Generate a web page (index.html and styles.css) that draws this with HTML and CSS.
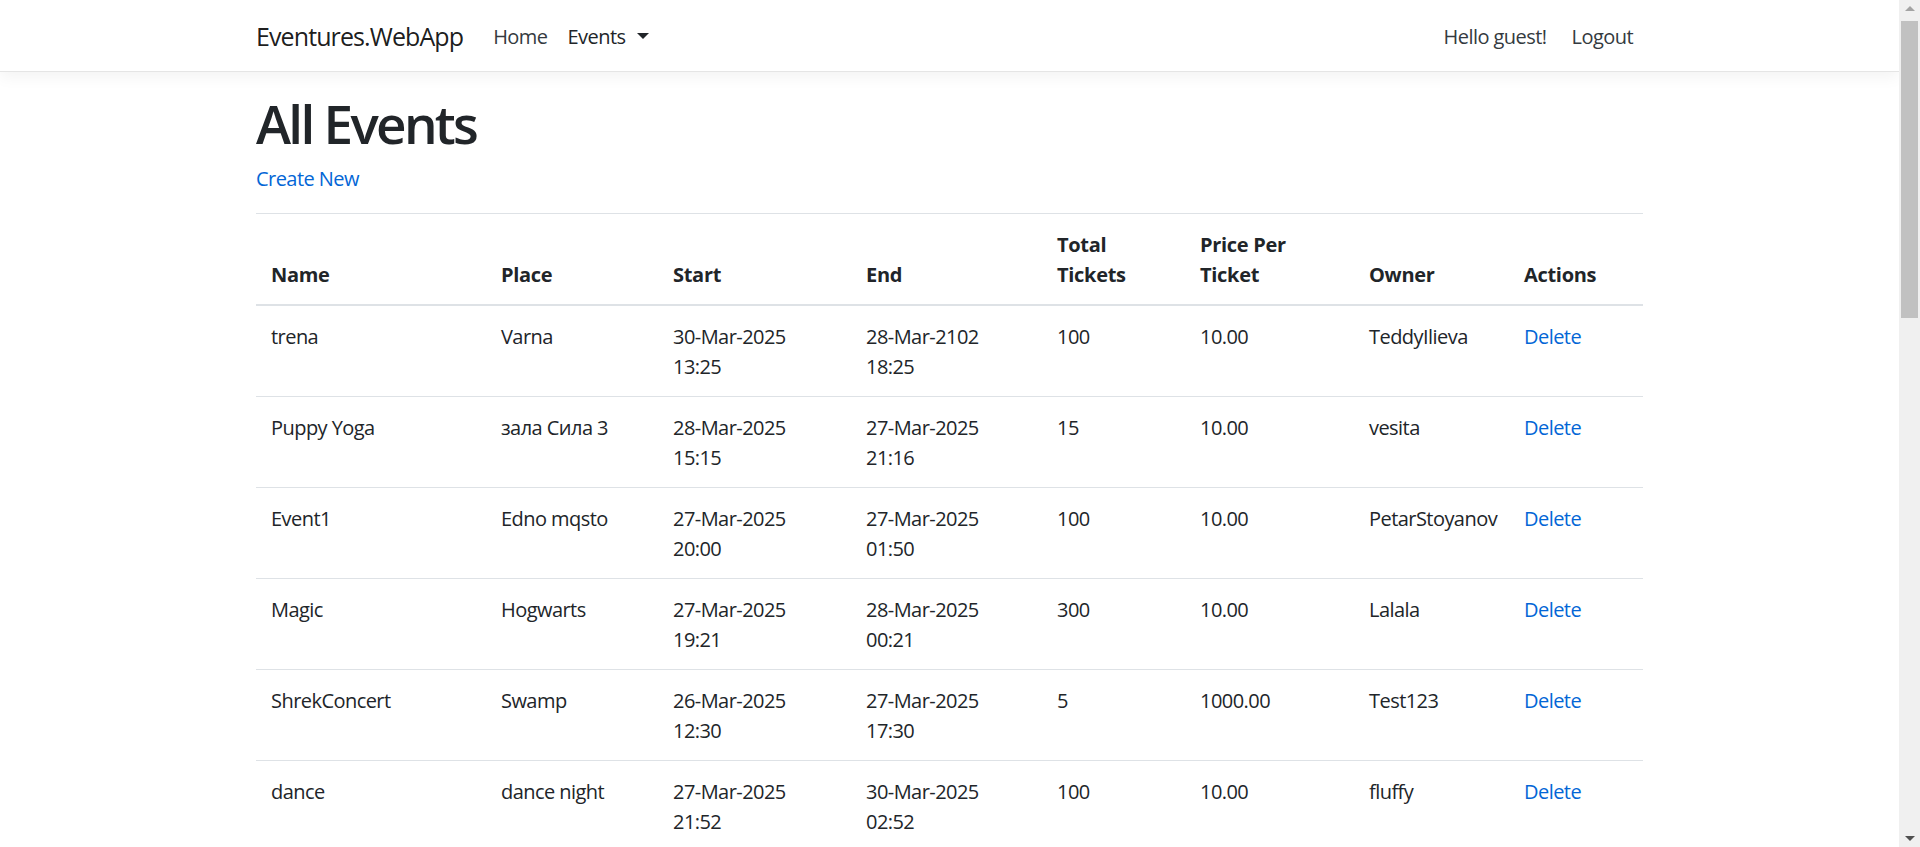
FILE: index.html
```html
<!DOCTYPE html>
<html lang="en">
<head>
<meta charset="utf-8">
<title>All Events - Eventures.WebApp</title>
<link rel="stylesheet" href="styles.css">
</head>
<body>
<div class="page">
  <header class="navbar">
    <div class="nav-inner">
      <a class="brand" href="#">Eventures.WebApp</a>
      <nav class="nav-left">
        <a class="nav-link" href="#">Home</a>
        <a class="nav-link nav-dropdown" href="#">Events<span class="caret"></span></a>
      </nav>
      <nav class="nav-right">
        <span class="nav-link nav-greet">Hello guest!</span>
        <a class="nav-link" href="#">Logout</a>
      </nav>
    </div>
  </header>
  <main class="container">
    <h1 class="title">All Events</h1>
    <p class="create"><a href="#">Create New</a></p>
    <table class="events">
      <colgroup>
        <col class="c-name"><col class="c-place"><col class="c-start"><col class="c-end"><col class="c-total"><col class="c-price"><col class="c-owner"><col class="c-actions">
      </colgroup>
      <thead>
        <tr><th>Name</th><th>Place</th><th>Start</th><th>End</th><th>Total Tickets</th><th>Price Per Ticket</th><th>Owner</th><th>Actions</th></tr>
      </thead>
      <tbody>
        <tr><td>trena</td><td>Varna</td><td>30-Mar-2025 13:25</td><td>28-Mar-2102 18:25</td><td>100</td><td>10.00</td><td>TeddyIlieva</td><td><a href="#">Delete</a></td></tr>
        <tr><td>Puppy Yoga</td><td>зала Сила 3</td><td>28-Mar-2025 15:15</td><td>27-Mar-2025 21:16</td><td>15</td><td>10.00</td><td>vesita</td><td><a href="#">Delete</a></td></tr>
        <tr><td>Event1</td><td>Edno mqsto</td><td>27-Mar-2025 20:00</td><td>27-Mar-2025 01:50</td><td>100</td><td>10.00</td><td>PetarStoyanov</td><td><a href="#">Delete</a></td></tr>
        <tr><td>Magic</td><td>Hogwarts</td><td>27-Mar-2025 19:21</td><td>28-Mar-2025 00:21</td><td>300</td><td>10.00</td><td>Lalala</td><td><a href="#">Delete</a></td></tr>
        <tr><td>ShrekConcert</td><td>Swamp</td><td>26-Mar-2025 12:30</td><td>27-Mar-2025 17:30</td><td>5</td><td>1000.00</td><td>Test123</td><td><a href="#">Delete</a></td></tr>
        <tr><td>dance</td><td>dance night</td><td>27-Mar-2025 21:52</td><td>30-Mar-2025 02:52</td><td>100</td><td>10.00</td><td>fluffy</td><td><a href="#">Delete</a></td></tr>
      </tbody>
    </table>
  </main>
</div>
<div class="scrollbar" aria-hidden="true">
  <div class="sb-arrow"><span class="sb-up"></span></div>
  <div class="sb-thumb"></div>
  <div class="sb-space"></div>
  <div class="sb-arrow"><span class="sb-down"></span></div>
</div>
</body>
</html>
```
FILE: styles.css
```css
html, body {
  margin: 0;
  height: 100%;
  overflow: hidden;
}
body {
  display: flex;
  font-family: "Segoe UI", "Open Sans", "Noto Sans", sans-serif;
  font-size: 20px;
  line-height: 30px;
  letter-spacing: -0.55px;
  color: #212529;
  background: #fff;
}
a {
  color: #0366d6;
  text-decoration: none;
}
.page {
  flex: 1;
  min-width: 0;
  height: 100%;
  overflow: hidden;
}

/* navbar */
.navbar {
  height: 71px;
  background: #fff;
  border-bottom: 1px solid #e5e5e5;
  box-shadow: 0 5px 15px rgba(0, 0, 0, 0.05);
}
.nav-inner {
  box-sizing: border-box;
  width: 1387px;
  height: 100%;
  margin: 0 auto;
  padding-top: 2px;
  display: flex;
  align-items: center;
}
.brand {
  font-size: 25px;
  line-height: 37px;
  letter-spacing: -0.9px;
  color: rgba(0, 0, 0, 0.9);
  margin-right: 20px;
}
.nav-left, .nav-right {
  display: flex;
  align-items: center;
}
.nav-right {
  margin-left: auto;
}
.nav-link {
  padding: 0 10px;
  color: #343a40;
}
.nav-greet {
  padding-right: 15px;
}
.nav-dropdown {
  color: #212529;
  display: flex;
  align-items: center;
}
.caret {
  width: 0;
  height: 0;
  margin-left: 12px;
  margin-top: -2px;
  border-top: 6px solid #212529;
  border-left: 6px solid transparent;
  border-right: 6px solid transparent;
}

/* content */
.container {
  width: 1387px;
  margin: 20px auto 0;
}
.title {
  font-size: 53px;
  line-height: 64px;
  font-weight: 600;
  letter-spacing: -2.7px;
  margin: 0 0 8px;
}
.create {
  margin: 0 0 19px;
}
.events {
  width: 100%;
  border-collapse: collapse;
  table-layout: fixed;
}
.c-name { width: 230px; }
.c-place { width: 172px; }
.c-start { width: 193px; }
.c-end { width: 191px; }
.c-total { width: 143px; }
.c-price { width: 169px; }
.c-owner { width: 155px; }
.c-actions { width: 134px; }
.events th, .events td {
  padding: 16px 15px 14px;
  border-top: 1px solid #dee2e6;
  text-align: left;
}
.events th {
  vertical-align: bottom;
  border-bottom: 2px solid #dee2e6;
  font-weight: 700;
  letter-spacing: -0.3px;
}
.events td {
  vertical-align: top;
}

/* fake window scrollbar */
.scrollbar {
  width: 21px;
  flex: none;
  height: 100%;
  background: #f0f0f0;
  display: flex;
  flex-direction: column;
  align-items: center;
}
.sb-arrow {
  height: 17px;
  display: flex;
  align-items: center;
  justify-content: center;
}
.sb-up {
  width: 0;
  height: 0;
  border-bottom: 5px solid #a3a3a3;
  border-left: 5px solid transparent;
  border-right: 5px solid transparent;
}
.sb-down {
  width: 0;
  height: 0;
  border-top: 5px solid #505050;
  border-left: 5px solid transparent;
  border-right: 5px solid transparent;
}
.sb-thumb {
  width: 17px;
  height: 297px;
  margin-top: 4px;
  background: #c1c1c1;
}
.sb-space {
  flex: 1;
}
```
